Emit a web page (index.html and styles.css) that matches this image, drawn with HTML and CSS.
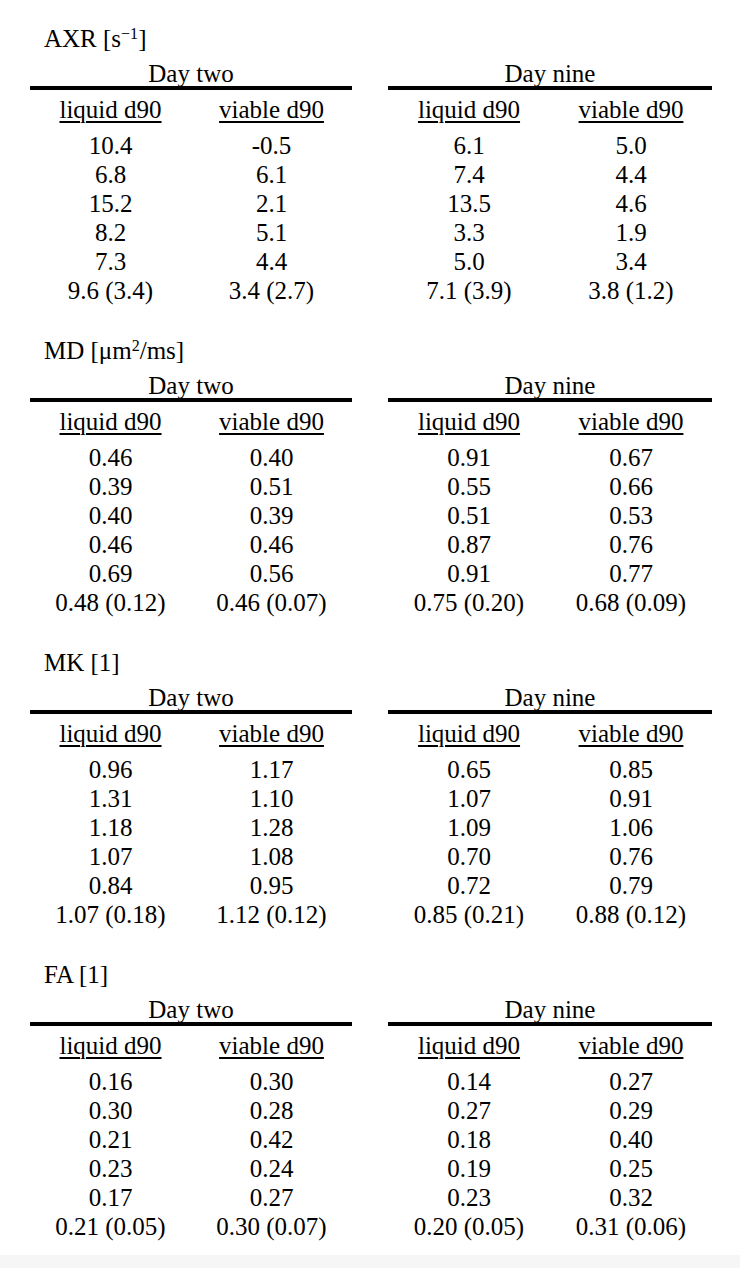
FILE: index.html
```html
<!DOCTYPE html>
<html lang="en">
<head>
<meta charset="utf-8">
<title>Diffusion metrics</title>
<link rel="stylesheet" href="styles.css">
</head>
<body>
<main class="page">

<section class="block">
  <h2 class="title">AXR [s<sup class="sup">−1</sup>]</h2>
  <div class="groups">
    <div class="group g1">
      <div class="group-head"><span class="group-label">Day two</span></div>
      <div class="cols">
        <div class="col"><div class="col-head"><span class="u">liquid d90</span></div>
          <ul class="vals"><li>10.4</li><li>6.8</li><li>15.2</li><li>8.2</li><li>7.3</li><li>9.6 (3.4)</li></ul></div>
        <div class="col"><div class="col-head"><span class="u">viable d90</span></div>
          <ul class="vals"><li>-0.5</li><li>6.1</li><li>2.1</li><li>5.1</li><li>4.4</li><li>3.4 (2.7)</li></ul></div>
      </div>
    </div>
    <div class="group g2">
      <div class="group-head"><span class="group-label">Day nine</span></div>
      <div class="cols">
        <div class="col"><div class="col-head"><span class="u">liquid d90</span></div>
          <ul class="vals"><li>6.1</li><li>7.4</li><li>13.5</li><li>3.3</li><li>5.0</li><li>7.1 (3.9)</li></ul></div>
        <div class="col"><div class="col-head"><span class="u">viable d90</span></div>
          <ul class="vals"><li>5.0</li><li>4.4</li><li>4.6</li><li>1.9</li><li>3.4</li><li>3.8 (1.2)</li></ul></div>
      </div>
    </div>
  </div>
</section>

<section class="block">
  <h2 class="title">MD [μm<sup class="sup">2</sup>/ms]</h2>
  <div class="groups">
    <div class="group g1">
      <div class="group-head"><span class="group-label">Day two</span></div>
      <div class="cols">
        <div class="col"><div class="col-head"><span class="u">liquid d90</span></div>
          <ul class="vals"><li>0.46</li><li>0.39</li><li>0.40</li><li>0.46</li><li>0.69</li><li>0.48 (0.12)</li></ul></div>
        <div class="col"><div class="col-head"><span class="u">viable d90</span></div>
          <ul class="vals"><li>0.40</li><li>0.51</li><li>0.39</li><li>0.46</li><li>0.56</li><li>0.46 (0.07)</li></ul></div>
      </div>
    </div>
    <div class="group g2">
      <div class="group-head"><span class="group-label">Day nine</span></div>
      <div class="cols">
        <div class="col"><div class="col-head"><span class="u">liquid d90</span></div>
          <ul class="vals"><li>0.91</li><li>0.55</li><li>0.51</li><li>0.87</li><li>0.91</li><li>0.75 (0.20)</li></ul></div>
        <div class="col"><div class="col-head"><span class="u">viable d90</span></div>
          <ul class="vals"><li>0.67</li><li>0.66</li><li>0.53</li><li>0.76</li><li>0.77</li><li>0.68 (0.09)</li></ul></div>
      </div>
    </div>
  </div>
</section>

<section class="block">
  <h2 class="title">MK [1]</h2>
  <div class="groups">
    <div class="group g1">
      <div class="group-head"><span class="group-label">Day two</span></div>
      <div class="cols">
        <div class="col"><div class="col-head"><span class="u">liquid d90</span></div>
          <ul class="vals"><li>0.96</li><li>1.31</li><li>1.18</li><li>1.07</li><li>0.84</li><li>1.07 (0.18)</li></ul></div>
        <div class="col"><div class="col-head"><span class="u">viable d90</span></div>
          <ul class="vals"><li>1.17</li><li>1.10</li><li>1.28</li><li>1.08</li><li>0.95</li><li>1.12 (0.12)</li></ul></div>
      </div>
    </div>
    <div class="group g2">
      <div class="group-head"><span class="group-label">Day nine</span></div>
      <div class="cols">
        <div class="col"><div class="col-head"><span class="u">liquid d90</span></div>
          <ul class="vals"><li>0.65</li><li>1.07</li><li>1.09</li><li>0.70</li><li>0.72</li><li>0.85 (0.21)</li></ul></div>
        <div class="col"><div class="col-head"><span class="u">viable d90</span></div>
          <ul class="vals"><li>0.85</li><li>0.91</li><li>1.06</li><li>0.76</li><li>0.79</li><li>0.88 (0.12)</li></ul></div>
      </div>
    </div>
  </div>
</section>

<section class="block">
  <h2 class="title">FA [1]</h2>
  <div class="groups">
    <div class="group g1">
      <div class="group-head"><span class="group-label">Day two</span></div>
      <div class="cols">
        <div class="col"><div class="col-head"><span class="u">liquid d90</span></div>
          <ul class="vals"><li>0.16</li><li>0.30</li><li>0.21</li><li>0.23</li><li>0.17</li><li>0.21 (0.05)</li></ul></div>
        <div class="col"><div class="col-head"><span class="u">viable d90</span></div>
          <ul class="vals"><li>0.30</li><li>0.28</li><li>0.42</li><li>0.24</li><li>0.27</li><li>0.30 (0.07)</li></ul></div>
      </div>
    </div>
    <div class="group g2">
      <div class="group-head"><span class="group-label">Day nine</span></div>
      <div class="cols">
        <div class="col"><div class="col-head"><span class="u">liquid d90</span></div>
          <ul class="vals"><li>0.14</li><li>0.27</li><li>0.18</li><li>0.19</li><li>0.23</li><li>0.20 (0.05)</li></ul></div>
        <div class="col"><div class="col-head"><span class="u">viable d90</span></div>
          <ul class="vals"><li>0.27</li><li>0.29</li><li>0.40</li><li>0.25</li><li>0.32</li><li>0.31 (0.06)</li></ul></div>
      </div>
    </div>
  </div>
</section>

</main>
</body>
</html>
```
FILE: styles.css
```css
html {
  background: #f6f6f6;
}

body {
  margin: 0;
  background: #ffffff;
  color: #000000;
  font-family: "Liberation Serif", "Times New Roman", serif;
  font-size: 25px;
  line-height: 29px;
}

.page {
  padding: 24px 0 14px 30px;
}

.block {
  margin-bottom: 31px;
}

.block:last-child {
  margin-bottom: 0;
}

.title {
  margin: 0 0 6px 0;
  padding-left: 14px;
  font-size: 25px;
  font-weight: normal;
  line-height: 29px;
}

.sup {
  font-size: 16px;
  line-height: 0;
  vertical-align: 8px;
}

.groups {
  display: grid;
  grid-template-columns: 322px 324px;
  column-gap: 36px;
}

.group-head {
  border-bottom: 4px solid #000000;
  padding-bottom: 3px;
}

.group-label {
  display: block;
  height: 24px;
  text-align: center;
}

.cols {
  display: grid;
  grid-template-columns: 1fr 1fr;
}

.col {
  text-align: center;
}

.col-head {
  margin: 5px 0 7px 0;
}

.u {
  text-decoration: underline;
  text-decoration-thickness: 2px;
  text-underline-offset: 3px;
}

.vals {
  list-style: none;
  margin: 0;
  padding: 0;
}
```
